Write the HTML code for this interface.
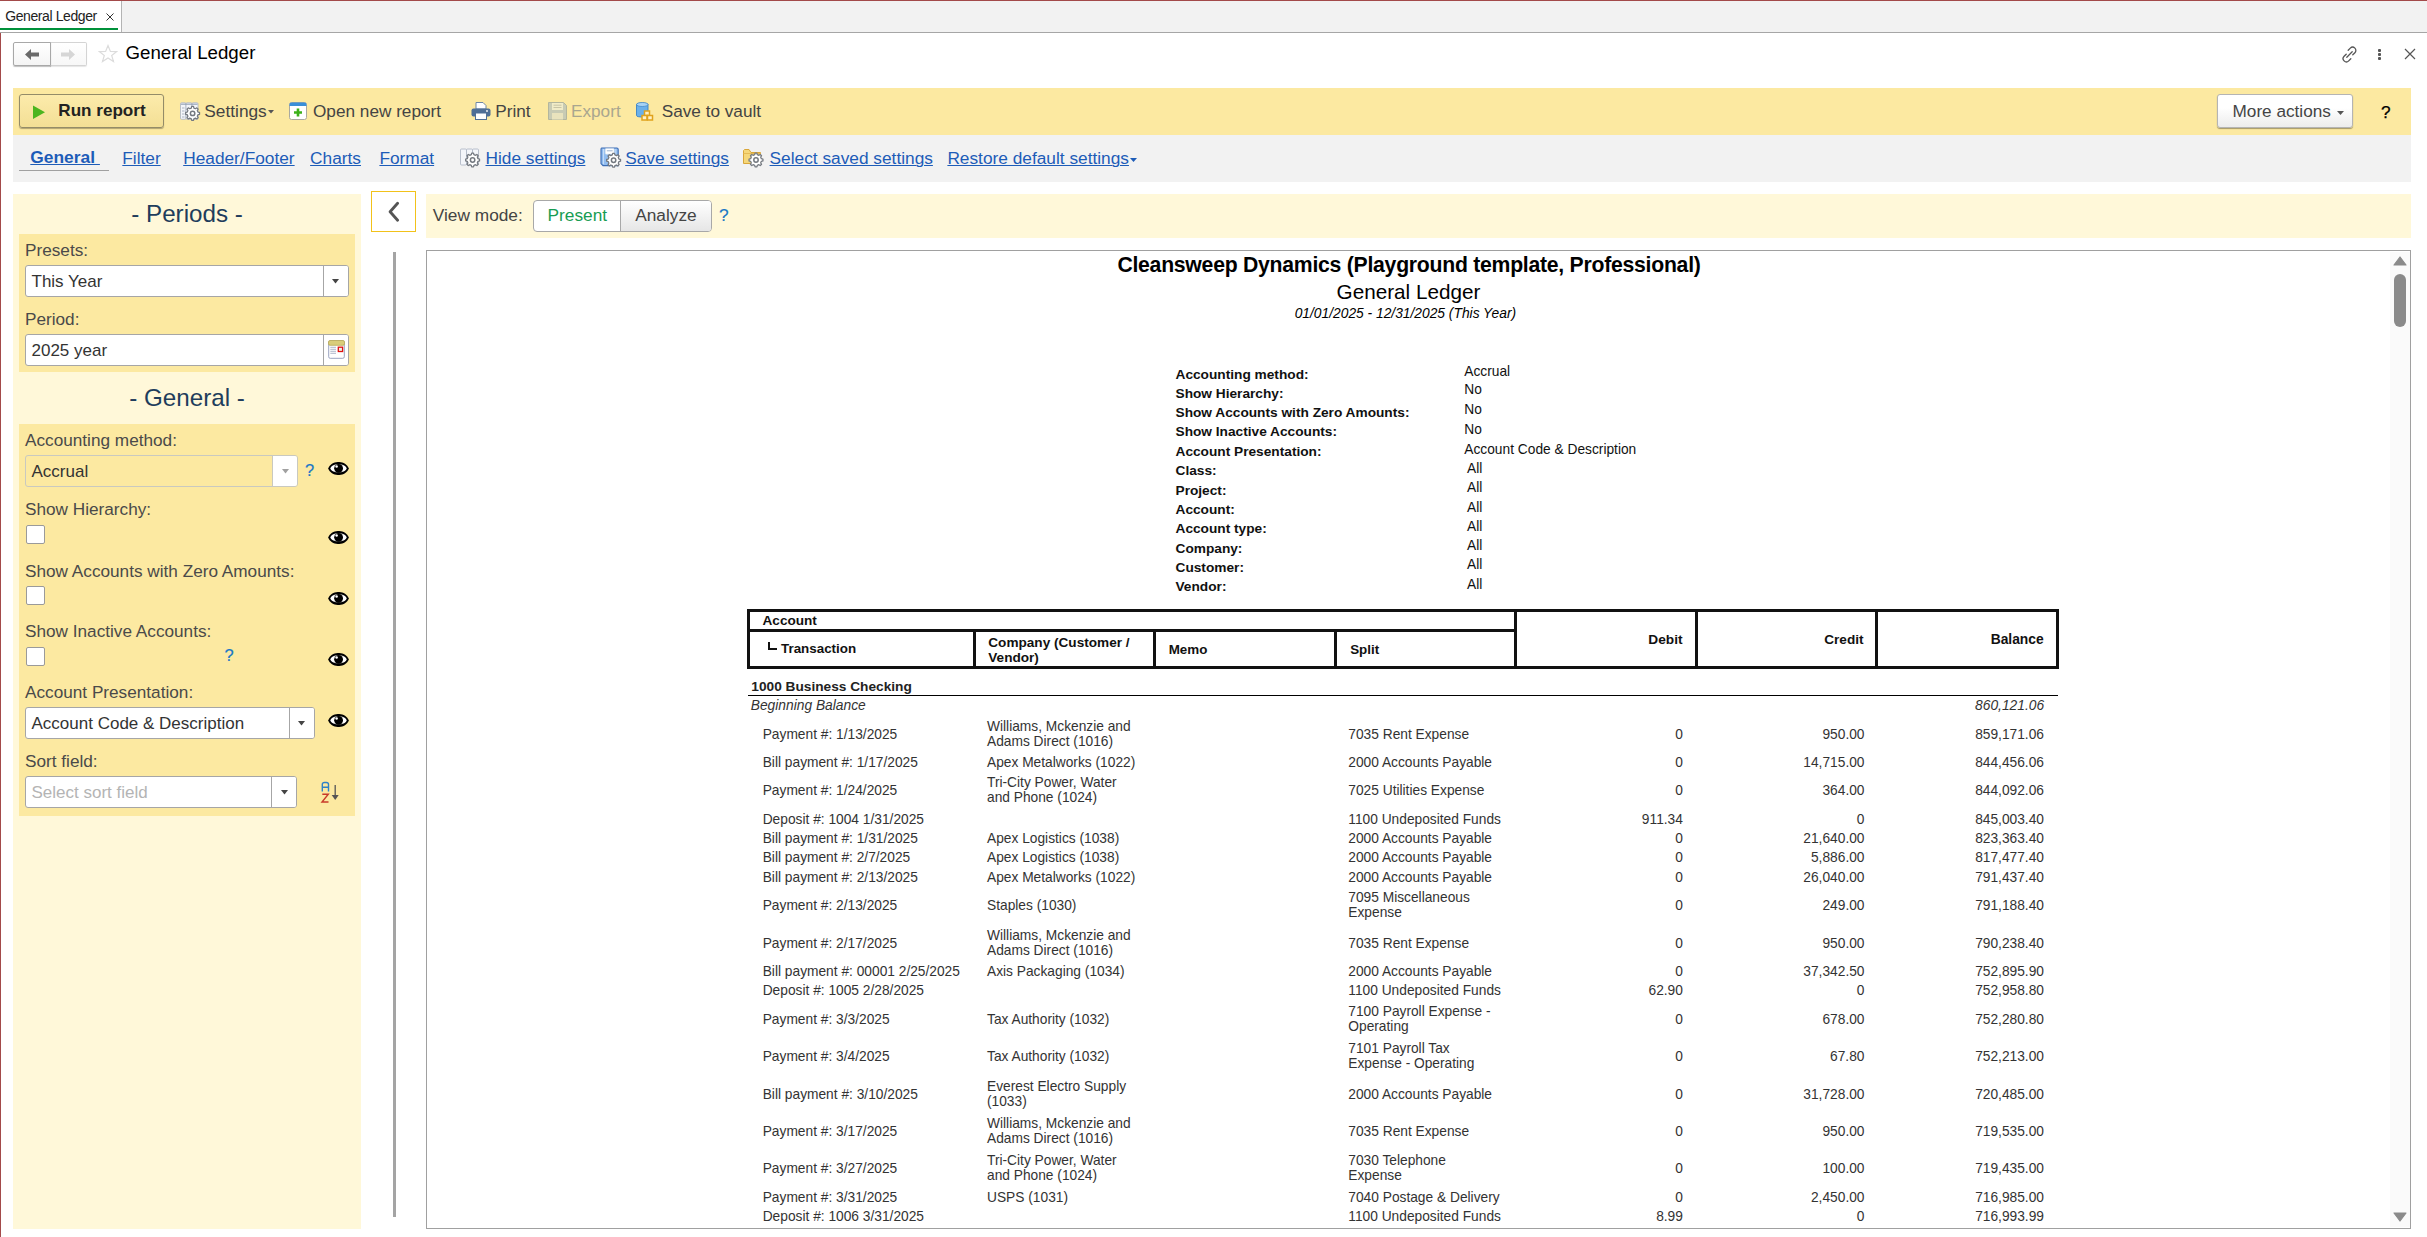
<!DOCTYPE html>
<html><head><meta charset="utf-8"><title>General Ledger</title>
<style>
html,body{margin:0;padding:0;}
body{width:2427px;height:1237px;overflow:hidden;position:relative;background:#fff;font-family:"Liberation Sans", sans-serif;}
.t{position:absolute;white-space:nowrap;}
.r{position:absolute;box-sizing:border-box;}
</style></head><body>
<div class="r" style="left:0px;top:0px;width:2427px;height:1px;background:#a34a4a;"></div>
<div class="r" style="left:0px;top:1px;width:2427px;height:31px;background:#f2f2f2;"></div>
<div class="r" style="left:0px;top:1px;width:121px;height:31px;background:#fff;"></div>
<div class="r" style="left:121px;top:1px;width:1px;height:31px;background:#b4b4b4;"></div>
<div class="r" style="left:0px;top:28px;width:118px;height:2px;background:#00913a;"></div>
<div class="t" style="left:5.20px;top:7.15px;font-size:14px;line-height:18px;color:#222;letter-spacing:-0.4px;">General Ledger</div>
<svg class="r" style="left:106px;top:13px" width="8" height="8" viewBox="0 0 8 8"><path d="M0.5 0.5L7.5 7.5M7.5 0.5L0.5 7.5" stroke="#333" stroke-width="1"/></svg>
<div class="r" style="left:0px;top:32px;width:2427px;height:1px;background:#a6a6a6;"></div>
<div class="r" style="left:0px;top:33px;width:1px;height:1204px;background:#a34a4a;"></div>
<div class="r" style="left:50px;top:42px;width:37px;height:24px;border:1px solid #d4d4d4;border-left:none;border-radius:0 2px 2px 0;background:linear-gradient(#fff,#f7f7f7);box-shadow:0 1px 1px rgba(0,0,0,.1);"></div>
<div class="r" style="left:13px;top:42px;width:38px;height:24px;border:1px solid #a8a8a8;border-radius:2px 0 0 2px;background:linear-gradient(#fff,#f4f4f4);box-shadow:0 1px 1px rgba(0,0,0,.25);"></div>
<svg class="r" style="left:25px;top:49px" width="14" height="11" viewBox="0 0 14 11"><path d="M0 5.5L6 0V3.5H14V7.5H6V11Z" fill="#6a6a6a"/></svg>
<svg class="r" style="left:61px;top:49px" width="14" height="11" viewBox="0 0 14 11"><path d="M14 5.5L8 0V3.5H0V7.5H8V11Z" fill="#d6d6d6"/></svg>
<svg class="r" style="left:98px;top:44px" width="20" height="20" viewBox="0 0 20 20"><path d="M10 1.5L12.4 7.4L18.6 7.6L13.7 11.5L15.5 17.6L10 14L4.5 17.6L6.3 11.5L1.4 7.6L7.6 7.4Z" fill="none" stroke="#dcdcdc" stroke-width="1.2"/></svg>
<div class="t" style="left:125.50px;top:41.22px;font-size:18.7px;line-height:24px;color:#000;">General Ledger</div>
<svg class="r" style="left:2341px;top:46px" width="17" height="17" viewBox="0 0 17 17"><g fill="none" stroke="#555" stroke-width="1.3" stroke-linecap="round"><path d="M7.2 4.2L9.3 2.1a3.2 3.2 0 0 1 4.6 4.6L11.8 8.8"/><path d="M9.8 12.8L7.7 14.9a3.2 3.2 0 0 1-4.6-4.6L5.2 8.2"/><path d="M5.8 11.2L11.2 5.8"/></g></svg>
<div class="r" style="left:2378px;top:49px;width:3px;height:3px;background:#555;border-radius:1px;"></div>
<div class="r" style="left:2378px;top:53px;width:3px;height:3px;background:#555;border-radius:1px;"></div>
<div class="r" style="left:2378px;top:57px;width:3px;height:3px;background:#555;border-radius:1px;"></div>
<svg class="r" style="left:2404px;top:48px" width="12" height="12" viewBox="0 0 12 12"><path d="M1 1L11 11M11 1L1 11" stroke="#555" stroke-width="1.2"/></svg>
<div class="r" style="left:13px;top:88px;width:2398px;height:47px;background:#fce9a1;"></div>
<div class="r" style="left:19px;top:94px;width:145px;height:34px;border:1px solid #948c68;border-radius:3px;background:linear-gradient(#fcebab,#f3df95);box-shadow:0 1px 1px rgba(0,0,0,.3);"></div>
<svg class="r" style="left:32px;top:105px" width="14" height="15" viewBox="0 0 14 15"><path d="M1 0.5L13 7.2L1 14Z" fill="#4cb51f"/></svg>
<div class="t" style="left:58.30px;top:99.97px;font-size:17.1px;line-height:22px;color:#222;font-weight:700;">Run report</div>
<svg class="r" style="left:180px;top:102px" width="21" height="20" viewBox="0 0 21 20"><g fill="#f3f5f9" stroke="#a9b3c3" stroke-width="0.8"><rect x="0.5" y="0.8" width="5.5" height="16.5" rx="1"/><rect x="6" y="0.8" width="6" height="16.5" rx="1"/><rect x="12" y="0.8" width="6" height="16.5" rx="1"/></g><path d="M2 6H4.5M2 9H4.5M2 12H4.5M2 15H4.5" stroke="#9aa3b5" stroke-width="0.8"/><path d="M1 2.2H17.5" stroke="#8d9bb0" stroke-width="1"/><path d="M11.32 6.05L11.67 4.46L13.53 4.46L13.88 6.05L15.47 6.71L16.85 5.84L18.16 7.15L17.29 8.53L17.95 10.12L19.54 10.47L19.54 12.33L17.95 12.68L17.29 14.27L18.16 15.65L16.85 16.96L15.47 16.09L13.88 16.75L13.53 18.34L11.67 18.34L11.32 16.75L9.73 16.09L8.35 16.96L7.04 15.65L7.91 14.27L7.25 12.68L5.66 12.33L5.66 10.47L7.25 10.12L7.91 8.53L7.04 7.15L8.35 5.84L9.73 6.71Z" fill="#fff" stroke="#747980" stroke-width="1.25" stroke-linejoin="round"/><circle cx="12.6" cy="11.4" r="2.2" fill="#fff" stroke="#747980" stroke-width="1.5"/></svg>
<div class="t" style="left:204.30px;top:99.81px;font-size:17.3px;line-height:22px;color:#444;">Settings</div>
<svg class="r" style="left:268px;top:110px" width="6" height="4" viewBox="0 0 6 4"><path d="M0 0H6L3 3.6Z" fill="#555"/></svg>
<svg class="r" style="left:289px;top:102px" width="18" height="18" viewBox="0 0 18 18"><rect x="0.5" y="0.5" width="17" height="17" rx="2" fill="#fff" stroke="#a9a9a0"/><path d="M0.5 2.5a2 2 0 0 1 2-2h13a2 2 0 0 1 2 2V4H0.5Z" fill="#3a8fd8"/><path d="M9 6.5V14.5M5 10.5H13" stroke="#3cb11a" stroke-width="2.6"/></svg>
<div class="t" style="left:313.00px;top:99.84px;font-size:17.2px;line-height:22px;color:#444;">Open new report</div>
<svg class="r" style="left:471px;top:102px" width="20" height="18" viewBox="0 0 20 18"><path d="M5 0.5H12L15 3.5V7H5Z" fill="#fff" stroke="#6d87a6" stroke-width="1"/><rect x="0.5" y="6.5" width="19" height="8" rx="2" fill="#4f6f96"/><rect x="4.5" y="11" width="11" height="6.5" fill="#fff" stroke="#4f6f96"/><circle cx="16" cy="9" r="0.9" fill="#fff"/></svg>
<div class="t" style="left:495.30px;top:99.84px;font-size:17.2px;line-height:22px;color:#444;">Print</div>
<svg class="r" style="left:548px;top:102px" width="19" height="18" viewBox="0 0 19 18"><path d="M0.5 0.5H15.5L18.5 3.5V17.5H0.5Z" fill="#c8cbb4" stroke="#b3b69e"/><rect x="4" y="1" width="11" height="7" fill="#f1ecc8"/><path d="M5.5 3.2H13.5M5.5 5.5H13.5" stroke="#c3c0a0" stroke-width="0.9"/><rect x="4" y="11" width="11" height="6.5" fill="#e9e3bd"/></svg>
<div class="t" style="left:571.00px;top:99.84px;font-size:17.2px;line-height:22px;color:#a9a68f;">Export</div>
<svg class="r" style="left:636px;top:102px" width="21" height="19" viewBox="0 0 21 19"><path d="M0.5 2.5C0.5 0.5 12 0.5 12 2.5V13.5C12 15.5 0.5 15.5 0.5 13.5Z" fill="#6ab0ea" stroke="#3b82c4" stroke-width="0.9"/><ellipse cx="6.25" cy="2.5" rx="5.75" ry="2" fill="#a7d3f5" stroke="#3b82c4" stroke-width="0.7"/><g fill="#fff1c4" stroke="#e0a21c" stroke-width="1.5"><rect x="8.5" y="9" width="5" height="4.5"/><rect x="6" y="13.5" width="5" height="4.5"/><rect x="11.5" y="13.5" width="5" height="4.5"/></g></svg>
<div class="t" style="left:661.70px;top:99.84px;font-size:17.2px;line-height:22px;color:#444;">Save to vault</div>
<div class="r" style="left:2217px;top:94px;width:136px;height:34px;border:1px solid #b4b4b4;border-radius:3px;background:linear-gradient(#fff 40%,#ececec);box-shadow:0 1px 1px rgba(0,0,0,.35);"></div>
<div class="t" style="left:2232.50px;top:99.84px;font-size:17.2px;line-height:22px;color:#444;">More actions</div>
<svg class="r" style="left:2337px;top:111px" width="7" height="4" viewBox="0 0 7 4"><path d="M0 0H7L3.5 4Z" fill="#555"/></svg>
<div class="t" style="left:2381.00px;top:100.64px;font-size:17.2px;line-height:22px;color:#000;-webkit-text-stroke:0.25px #000;">?</div>
<div class="r" style="left:13px;top:135px;width:2398px;height:47px;background:#f2f2f2;"></div>
<div class="t" style="left:30.30px;top:146.17px;font-size:17.4px;line-height:23px;color:#1d5cb8;font-weight:700;text-decoration:underline;text-underline-offset:1px;text-decoration-thickness:1px;">General&nbsp;</div>
<div class="r" style="left:19px;top:170px;width:90px;height:1px;background:#a0a0a0;"></div>
<div class="t" style="left:122.30px;top:146.71px;font-size:17.3px;line-height:22px;color:#1d5cb8;text-decoration:underline;text-underline-offset:1px;text-decoration-thickness:1px;">Filter</div>
<div class="t" style="left:183.20px;top:146.71px;font-size:17.3px;line-height:22px;color:#1d5cb8;text-decoration:underline;text-underline-offset:1px;text-decoration-thickness:1px;">Header/Footer</div>
<div class="t" style="left:310.10px;top:146.71px;font-size:17.3px;line-height:22px;color:#1d5cb8;text-decoration:underline;text-underline-offset:1px;text-decoration-thickness:1px;">Charts</div>
<div class="t" style="left:379.40px;top:146.71px;font-size:17.3px;line-height:22px;color:#1d5cb8;text-decoration:underline;text-underline-offset:1px;text-decoration-thickness:1px;">Format</div>
<svg class="r" style="left:460px;top:148px" width="21" height="20" viewBox="0 0 21 20"><g fill="#f4f6fa" stroke="#aab3c2" stroke-width="0.8"><rect x="0.5" y="1" width="6" height="16" rx="1"/><rect x="6.5" y="1" width="6" height="16" rx="1"/><rect x="12.5" y="1" width="6" height="16" rx="1"/></g><path d="M11.32 6.65L11.67 5.06L13.53 5.06L13.88 6.65L15.47 7.31L16.85 6.44L18.16 7.75L17.29 9.13L17.95 10.72L19.54 11.07L19.54 12.93L17.95 13.28L17.29 14.87L18.16 16.25L16.85 17.56L15.47 16.69L13.88 17.35L13.53 18.94L11.67 18.94L11.32 17.35L9.73 16.69L8.35 17.56L7.04 16.25L7.91 14.87L7.25 13.28L5.66 12.93L5.66 11.07L7.25 10.72L7.91 9.13L7.04 7.75L8.35 6.44L9.73 7.31Z" fill="#fff" stroke="#747980" stroke-width="1.25" stroke-linejoin="round"/><circle cx="12.6" cy="12" r="2.2" fill="#fff" stroke="#747980" stroke-width="1.5"/></svg>
<div class="t" style="left:485.50px;top:146.71px;font-size:17.3px;line-height:22px;color:#1d5cb8;text-decoration:underline;text-underline-offset:1px;text-decoration-thickness:1px;">Hide settings</div>
<svg class="r" style="left:600px;top:147px" width="22" height="22" viewBox="0 0 22 22"><path d="M1.6 1H16.8Q18.2 1 18.2 2.4V18.6H3L1 16.6V2.4Q1 1 1.6 1Z" fill="#92bdf0" stroke="#3c6cb3" stroke-width="1.1"/><path d="M3.5 2V17M15.8 2V12" stroke="#c4dcf8" stroke-width="1"/><rect x="5.2" y="1.6" width="9" height="5.6" rx="1" fill="#fff" stroke="#c9d6e6" stroke-width="0.6"/><path d="M6.8 3.8H12.6" stroke="#9db3cf" stroke-width="1"/><path d="M12.32 7.95L12.67 6.36L14.53 6.36L14.88 7.95L16.47 8.61L17.85 7.74L19.16 9.05L18.29 10.43L18.95 12.02L20.54 12.37L20.54 14.23L18.95 14.58L18.29 16.17L19.16 17.55L17.85 18.86L16.47 17.99L14.88 18.65L14.53 20.24L12.67 20.24L12.32 18.65L10.73 17.99L9.35 18.86L8.04 17.55L8.91 16.17L8.25 14.58L6.66 14.23L6.66 12.37L8.25 12.02L8.91 10.43L8.04 9.05L9.35 7.74L10.73 8.61Z" fill="#fff" stroke="#747980" stroke-width="1.25" stroke-linejoin="round"/><circle cx="13.6" cy="13.3" r="2.2" fill="#fff" stroke="#747980" stroke-width="1.5"/></svg>
<div class="t" style="left:625.20px;top:146.71px;font-size:17.3px;line-height:22px;color:#1d5cb8;text-decoration:underline;text-underline-offset:1px;text-decoration-thickness:1px;">Save settings</div>
<svg class="r" style="left:743px;top:147px" width="22" height="21" viewBox="0 0 22 21"><path d="M0.5 3.5V16.5H17.5V5.5H8L6 2.5H1.5Z" fill="#f5d77a" stroke="#d9a63a"/><path d="M0.5 6.5H17.5" stroke="#e6bb55"/><path d="M11.72 7.65L12.07 6.06L13.93 6.06L14.28 7.65L15.87 8.31L17.25 7.44L18.56 8.75L17.69 10.13L18.35 11.72L19.94 12.07L19.94 13.93L18.35 14.28L17.69 15.87L18.56 17.25L17.25 18.56L15.87 17.69L14.28 18.35L13.93 19.94L12.07 19.94L11.72 18.35L10.13 17.69L8.75 18.56L7.44 17.25L8.31 15.87L7.65 14.28L6.06 13.93L6.06 12.07L7.65 11.72L8.31 10.13L7.44 8.75L8.75 7.44L10.13 8.31Z" fill="#fff" stroke="#747980" stroke-width="1.25" stroke-linejoin="round"/><circle cx="13" cy="13" r="2.2" fill="#fff" stroke="#747980" stroke-width="1.5"/></svg>
<div class="t" style="left:769.60px;top:146.71px;font-size:17.3px;line-height:22px;color:#1d5cb8;text-decoration:underline;text-underline-offset:1px;text-decoration-thickness:1px;">Select saved settings</div>
<div class="t" style="left:947.40px;top:146.71px;font-size:17.3px;line-height:22px;color:#1d5cb8;text-decoration:underline;text-underline-offset:1px;text-decoration-thickness:1px;">Restore default settings</div>
<svg class="r" style="left:1130px;top:158px" width="7" height="4" viewBox="0 0 7 4"><path d="M0 0H7L3.5 4Z" fill="#1d5cb8"/></svg>
<div class="r" style="left:13px;top:194px;width:348px;height:1035px;background:#fff8d9;"></div>
<div class="t" style="left:-813.00px;width:2000px;text-align:center;top:197.71px;font-size:24.2px;line-height:31px;color:#1e3d5c;">- Periods -</div>
<div class="r" style="left:19px;top:234px;width:336px;height:138px;background:#fce9a1;"></div>
<div class="t" style="left:25.00px;top:239.04px;font-size:17.2px;line-height:22px;color:#4a4a4a;">Presets:</div>
<div class="r" style="left:25px;top:265px;width:324px;height:32px;border:1px solid #a6a6a6;border-radius:3px;background:#fff;"></div>
<div class="r" style="left:323px;top:266px;width:25px;height:30px;background:#fff;border-left:1px solid #a6a6a6;border-radius:0 2px 2px 0;"></div>
<div class="t" style="left:31.50px;top:270.71px;font-size:17.0px;line-height:22px;color:#333;">This Year</div>
<svg class="r" style="left:332px;top:279px" width="7" height="5" viewBox="0 0 7 5"><path d="M0 0H7L3.5 4.5Z" fill="#444"/></svg>
<div class="t" style="left:25.00px;top:307.74px;font-size:17.2px;line-height:22px;color:#4a4a4a;">Period:</div>
<div class="r" style="left:25px;top:334px;width:324px;height:32px;border:1px solid #a6a6a6;border-radius:3px;background:#fff;"></div>
<div class="r" style="left:323px;top:335px;width:25px;height:30px;background:#fff;border-left:1px solid #a6a6a6;border-radius:0 2px 2px 0;"></div>
<div class="t" style="left:31.50px;top:339.71px;font-size:17.0px;line-height:22px;color:#333;">2025 year</div>
<svg class="r" style="left:328px;top:340px" width="17" height="19" viewBox="0 0 17 19"><rect x="0.7" y="1" width="15.6" height="17.3" rx="1.5" fill="#fff" stroke="#9aa3c0" stroke-width="1"/><rect x="0.5" y="0.5" width="16" height="4.8" rx="1.5" fill="#d9cd7a" stroke="#b8a855" stroke-width="0.8"/><path d="M2.3 7.3H8M2.3 9.3H8M2.3 11.3H8M2.3 13.3H8" stroke="#9aa3bb" stroke-width="0.8"/><rect x="10.3" y="7.2" width="4.3" height="4.3" fill="#e8f8e8" stroke="#e01010" stroke-width="1.3"/></svg>
<div class="t" style="left:-813.00px;width:2000px;text-align:center;top:381.61px;font-size:24.2px;line-height:31px;color:#1e3d5c;">- General -</div>
<div class="r" style="left:19px;top:424px;width:336px;height:392px;background:#fce9a1;"></div>
<div class="t" style="left:25.00px;top:428.54px;font-size:17.2px;line-height:22px;color:#4a4a4a;">Accounting method:</div>
<div class="r" style="left:25px;top:455px;width:273px;height:32px;border:1px solid #c9c9c0;border-radius:3px;background:#fce9a1;"></div>
<div class="r" style="left:272px;top:456px;width:25px;height:30px;background:#fff;border-left:1px solid #c9c9c0;border-radius:0 2px 2px 0;"></div>
<div class="t" style="left:31.50px;top:460.51px;font-size:17.0px;line-height:22px;color:#333;">Accrual</div>
<svg class="r" style="left:282px;top:469px" width="7" height="5" viewBox="0 0 7 5"><path d="M0 0H7L3.5 4.5Z" fill="#a0a0a0"/></svg>
<div class="t" style="left:305.00px;top:459.78px;font-size:16.5px;line-height:21px;color:#1a78c6;-webkit-text-stroke:0.2px #1a78c6;">?</div>
<svg class="r" style="left:328px;top:462px" width="21" height="13" viewBox="0 0 21 13"><path d="M0.2 6.5C3.5 -2.2 17.5 -2.2 20.8 6.5C17.5 15.2 3.5 15.2 0.2 6.5Z" fill="#000"/><path d="M2.4 6.4C4 1 17 1 18.6 6.4C17 11.6 4 11.6 2.4 6.4Z" fill="#fff"/><circle cx="10.6" cy="6.3" r="4.4" fill="#000"/><circle cx="8.6" cy="4.4" r="1.25" fill="#fff"/></svg>
<div class="t" style="left:25.00px;top:498.24px;font-size:17.2px;line-height:22px;color:#4a4a4a;">Show Hierarchy:</div>
<div class="r" style="left:26px;top:525px;width:19px;height:19px;border:1px solid #9a9a9a;border-radius:2px;background:#fff;"></div>
<svg class="r" style="left:328px;top:531px" width="21" height="13" viewBox="0 0 21 13"><path d="M0.2 6.5C3.5 -2.2 17.5 -2.2 20.8 6.5C17.5 15.2 3.5 15.2 0.2 6.5Z" fill="#000"/><path d="M2.4 6.4C4 1 17 1 18.6 6.4C17 11.6 4 11.6 2.4 6.4Z" fill="#fff"/><circle cx="10.6" cy="6.3" r="4.4" fill="#000"/><circle cx="8.6" cy="4.4" r="1.25" fill="#fff"/></svg>
<div class="t" style="left:25.00px;top:559.54px;font-size:17.2px;line-height:22px;color:#4a4a4a;">Show Accounts with Zero Amounts:</div>
<div class="r" style="left:26px;top:586px;width:19px;height:19px;border:1px solid #9a9a9a;border-radius:2px;background:#fff;"></div>
<svg class="r" style="left:328px;top:592px" width="21" height="13" viewBox="0 0 21 13"><path d="M0.2 6.5C3.5 -2.2 17.5 -2.2 20.8 6.5C17.5 15.2 3.5 15.2 0.2 6.5Z" fill="#000"/><path d="M2.4 6.4C4 1 17 1 18.6 6.4C17 11.6 4 11.6 2.4 6.4Z" fill="#fff"/><circle cx="10.6" cy="6.3" r="4.4" fill="#000"/><circle cx="8.6" cy="4.4" r="1.25" fill="#fff"/></svg>
<div class="t" style="left:25.00px;top:620.34px;font-size:17.2px;line-height:22px;color:#4a4a4a;">Show Inactive Accounts:</div>
<div class="r" style="left:26px;top:647px;width:19px;height:19px;border:1px solid #9a9a9a;border-radius:2px;background:#fff;"></div>
<svg class="r" style="left:328px;top:653px" width="21" height="13" viewBox="0 0 21 13"><path d="M0.2 6.5C3.5 -2.2 17.5 -2.2 20.8 6.5C17.5 15.2 3.5 15.2 0.2 6.5Z" fill="#000"/><path d="M2.4 6.4C4 1 17 1 18.6 6.4C17 11.6 4 11.6 2.4 6.4Z" fill="#fff"/><circle cx="10.6" cy="6.3" r="4.4" fill="#000"/><circle cx="8.6" cy="4.4" r="1.25" fill="#fff"/></svg>
<div class="t" style="left:224.50px;top:644.78px;font-size:16.5px;line-height:21px;color:#1a78c6;-webkit-text-stroke:0.2px #1a78c6;">?</div>
<div class="t" style="left:25.00px;top:681.04px;font-size:17.2px;line-height:22px;color:#4a4a4a;">Account Presentation:</div>
<div class="r" style="left:25px;top:707px;width:290px;height:32px;border:1px solid #a6a6a6;border-radius:3px;background:#fff;"></div>
<div class="r" style="left:289px;top:708px;width:25px;height:30px;background:#fff;border-left:1px solid #a6a6a6;border-radius:0 2px 2px 0;"></div>
<div class="t" style="left:31.50px;top:712.71px;font-size:17.0px;line-height:22px;color:#333;">Account Code &amp; Description</div>
<svg class="r" style="left:298px;top:721px" width="7" height="5" viewBox="0 0 7 5"><path d="M0 0H7L3.5 4.5Z" fill="#444"/></svg>
<svg class="r" style="left:328px;top:714px" width="21" height="13" viewBox="0 0 21 13"><path d="M0.2 6.5C3.5 -2.2 17.5 -2.2 20.8 6.5C17.5 15.2 3.5 15.2 0.2 6.5Z" fill="#000"/><path d="M2.4 6.4C4 1 17 1 18.6 6.4C17 11.6 4 11.6 2.4 6.4Z" fill="#fff"/><circle cx="10.6" cy="6.3" r="4.4" fill="#000"/><circle cx="8.6" cy="4.4" r="1.25" fill="#fff"/></svg>
<div class="t" style="left:25.00px;top:749.74px;font-size:17.2px;line-height:22px;color:#4a4a4a;">Sort field:</div>
<div class="r" style="left:25px;top:776px;width:272px;height:32px;border:1px solid #a6a6a6;border-radius:3px;background:#fff;"></div>
<div class="r" style="left:271px;top:777px;width:25px;height:30px;background:#fff;border-left:1px solid #a6a6a6;border-radius:0 2px 2px 0;"></div>
<div class="t" style="left:31.50px;top:781.51px;font-size:17.0px;line-height:22px;color:#b4b4b4;">Select sort field</div>
<svg class="r" style="left:281px;top:790px" width="7" height="5" viewBox="0 0 7 5"><path d="M0 0H7L3.5 4.5Z" fill="#444"/></svg>
<svg class="r" style="left:320px;top:781px" width="20" height="23" viewBox="0 0 20 23"><path d="M2.3 10.5V3.5Q2.3 1.5 4.5 1.5H6.3Q8.5 1.5 8.5 3.5V10.5M2.3 6.3H8.5" fill="none" stroke="#2f82c8" stroke-width="1.4"/><path d="M2.3 13.2H8.3L2 21H8.5" fill="none" stroke="#c83a2a" stroke-width="1.4"/><path d="M15.2 4V15" stroke="#555" stroke-width="1.3"/><path d="M11.7 14H18.7L15.2 19Z" fill="#555"/></svg>
<div class="r" style="left:371px;top:191px;width:45px;height:41px;border:1px solid #f2c21a;background:#fff;"></div>
<svg class="r" style="left:386px;top:201px" width="14" height="21" viewBox="0 0 14 21"><path d="M11.6 2.2L4.1 10.7L11.6 19.2" fill="none" stroke="#555" stroke-width="2.8" stroke-linecap="round" stroke-linejoin="round"/></svg>
<div class="r" style="left:393px;top:252px;width:3px;height:965px;background:#a4a4a4;"></div>
<div class="r" style="left:426px;top:194px;width:1985px;height:44px;background:#fff8d9;"></div>
<div class="t" style="left:432.80px;top:203.71px;font-size:17.3px;line-height:22px;color:#444;">View mode:</div>
<div class="r" style="left:533px;top:200px;width:179px;height:32px;border:1px solid #a8a8a8;border-radius:4px;background:#fff;overflow:hidden;"></div>
<div class="r" style="left:620px;top:201px;width:91px;height:30px;border-left:1px solid #a8a8a8;border-radius:0 3px 3px 0;background:linear-gradient(#fff,#e6e6e6);"></div>
<div class="t" style="left:547.50px;top:203.71px;font-size:17.3px;line-height:22px;color:#179c52;">Present</div>
<div class="t" style="left:635.20px;top:203.71px;font-size:17.3px;line-height:22px;color:#444;">Analyze</div>
<div class="t" style="left:719.00px;top:203.91px;font-size:17.3px;line-height:22px;color:#1a78c6;-webkit-text-stroke:0.15px #1a78c6;">?</div>
<div class="r" style="left:426px;top:250px;width:1985px;height:979px;border:1px solid #a0a0a0;background:#fff;"></div>
<div class="r" style="left:2390px;top:252px;width:20px;height:975px;background:#fafafa;"></div>
<svg class="r" style="left:2393px;top:256px" width="14" height="10" viewBox="0 0 14 10"><path d="M7 1L13 9H1Z" fill="#8a8a8a" stroke="#8a8a8a" stroke-width="1.2" stroke-linejoin="round"/></svg>
<div class="r" style="left:2394px;top:274px;width:12px;height:53px;background:#8a8a8a;border-radius:6px;"></div>
<svg class="r" style="left:2393px;top:1212px" width="14" height="10" viewBox="0 0 14 10"><path d="M1 1H13L7 9Z" fill="#8a8a8a" stroke="#8a8a8a" stroke-width="1.2" stroke-linejoin="round"/></svg>
<div class="t" style="left:409.00px;width:2000px;text-align:center;top:251.15px;font-size:21.2px;line-height:28px;color:#000;font-weight:700;letter-spacing:-0.25px;">Cleansweep Dynamics (Playground template, Professional)</div>
<div class="t" style="left:408.50px;width:2000px;text-align:center;top:278.33px;font-size:20.7px;line-height:27px;color:#000;">General Ledger</div>
<div class="t" style="left:405.40px;width:2000px;text-align:center;top:304.72px;font-size:13.8px;line-height:18px;color:#000;font-style:italic;">01/01/2025 - 12/31/2025 (This Year)</div>
<div class="t" style="left:1175.50px;top:366.00px;font-size:13.7px;line-height:18px;color:#111;font-weight:700;">Accounting method:</div>
<div class="t" style="left:1464.30px;top:363.00px;font-size:13.75px;line-height:18px;color:#111;">Accrual</div>
<div class="t" style="left:1175.50px;top:385.00px;font-size:13.7px;line-height:18px;color:#111;font-weight:700;">Show Hierarchy:</div>
<div class="t" style="left:1464.30px;top:381.00px;font-size:13.75px;line-height:18px;color:#111;">No</div>
<div class="t" style="left:1175.50px;top:404.00px;font-size:13.7px;line-height:18px;color:#111;font-weight:700;">Show Accounts with Zero Amounts:</div>
<div class="t" style="left:1464.30px;top:401.00px;font-size:13.75px;line-height:18px;color:#111;">No</div>
<div class="t" style="left:1175.50px;top:423.00px;font-size:13.7px;line-height:18px;color:#111;font-weight:700;">Show Inactive Accounts:</div>
<div class="t" style="left:1464.30px;top:421.00px;font-size:13.75px;line-height:18px;color:#111;">No</div>
<div class="t" style="left:1175.50px;top:443.00px;font-size:13.7px;line-height:18px;color:#111;font-weight:700;">Account Presentation:</div>
<div class="t" style="left:1464.30px;top:441.00px;font-size:13.75px;line-height:18px;color:#111;">Account Code &amp; Description</div>
<div class="t" style="left:1175.50px;top:462.00px;font-size:13.7px;line-height:18px;color:#111;font-weight:700;">Class:</div>
<div class="t" style="left:1467.00px;top:460.00px;font-size:13.75px;line-height:18px;color:#111;">All</div>
<div class="t" style="left:1175.50px;top:482.00px;font-size:13.7px;line-height:18px;color:#111;font-weight:700;">Project:</div>
<div class="t" style="left:1467.00px;top:479.00px;font-size:13.75px;line-height:18px;color:#111;">All</div>
<div class="t" style="left:1175.50px;top:501.00px;font-size:13.7px;line-height:18px;color:#111;font-weight:700;">Account:</div>
<div class="t" style="left:1467.00px;top:499.00px;font-size:13.75px;line-height:18px;color:#111;">All</div>
<div class="t" style="left:1175.50px;top:520.00px;font-size:13.7px;line-height:18px;color:#111;font-weight:700;">Account type:</div>
<div class="t" style="left:1467.00px;top:518.00px;font-size:13.75px;line-height:18px;color:#111;">All</div>
<div class="t" style="left:1175.50px;top:540.00px;font-size:13.7px;line-height:18px;color:#111;font-weight:700;">Company:</div>
<div class="t" style="left:1467.00px;top:537.00px;font-size:13.75px;line-height:18px;color:#111;">All</div>
<div class="t" style="left:1175.50px;top:559.00px;font-size:13.7px;line-height:18px;color:#111;font-weight:700;">Customer:</div>
<div class="t" style="left:1467.00px;top:556.00px;font-size:13.75px;line-height:18px;color:#111;">All</div>
<div class="t" style="left:1175.50px;top:578.00px;font-size:13.7px;line-height:18px;color:#111;font-weight:700;">Vendor:</div>
<div class="t" style="left:1467.00px;top:576.00px;font-size:13.75px;line-height:18px;color:#111;">All</div>
<div class="r" style="left:747px;top:609px;width:1312px;height:3px;background:#111;"></div>
<div class="r" style="left:747px;top:666px;width:1312px;height:3px;background:#111;"></div>
<div class="r" style="left:747px;top:629px;width:769px;height:3px;background:#111;"></div>
<div class="r" style="left:747px;top:609px;width:3px;height:60px;background:#111;"></div>
<div class="r" style="left:973px;top:629px;width:3px;height:40px;background:#111;"></div>
<div class="r" style="left:1153px;top:629px;width:3px;height:40px;background:#111;"></div>
<div class="r" style="left:1334px;top:629px;width:3px;height:40px;background:#111;"></div>
<div class="r" style="left:1514px;top:609px;width:3px;height:60px;background:#111;"></div>
<div class="r" style="left:1695px;top:609px;width:3px;height:60px;background:#111;"></div>
<div class="r" style="left:1875px;top:609px;width:3px;height:60px;background:#111;"></div>
<div class="r" style="left:2056px;top:609px;width:3px;height:60px;background:#111;"></div>
<div class="t" style="left:762.50px;top:612.09px;font-size:13.6px;line-height:18px;color:#111;font-weight:700;">Account</div>
<div class="r" style="left:768px;top:642px;width:2px;height:8px;background:#111;"></div>
<div class="r" style="left:768px;top:648px;width:9px;height:2px;background:#111;"></div>
<div class="t" style="left:781.00px;top:639.86px;font-size:13.4px;line-height:17px;color:#111;font-weight:700;">Transaction</div>
<div class="t" style="left:988.30px;top:633.89px;font-size:13.6px;line-height:18px;color:#111;font-weight:700;">Company (Customer /</div>
<div class="t" style="left:988.30px;top:648.79px;font-size:13.6px;line-height:18px;color:#111;font-weight:700;">Vendor)</div>
<div class="t" style="left:1168.70px;top:641.26px;font-size:13.4px;line-height:17px;color:#111;font-weight:700;">Memo</div>
<div class="t" style="left:1350.20px;top:641.26px;font-size:13.4px;line-height:17px;color:#111;font-weight:700;">Split</div>
<div class="t" style="right:744.50px;top:631.25px;font-size:13.7px;line-height:18px;color:#111;font-weight:700;">Debit</div>
<div class="t" style="right:563.50px;top:631.29px;font-size:13.6px;line-height:18px;color:#111;font-weight:700;">Credit</div>
<div class="t" style="right:383.40px;top:631.22px;font-size:13.8px;line-height:18px;color:#111;font-weight:700;">Balance</div>
<div class="t" style="left:751.30px;top:678.25px;font-size:13.7px;line-height:18px;color:#222;font-weight:700;">1000 Business Checking</div>
<div class="r" style="left:748px;top:695px;width:1310px;height:1px;background:#000;"></div>
<div class="t" style="left:750.70px;top:696.52px;font-size:13.8px;line-height:18px;color:#333;font-style:italic;">Beginning Balance</div>
<div class="t" style="right:382.90px;top:696.52px;font-size:13.8px;line-height:18px;color:#333;font-style:italic;">860,121.06</div>
<div class="t" style="left:762.70px;top:726.00px;font-size:13.75px;line-height:18px;color:#333;">Payment #: 1/13/2025</div>
<div class="t" style="left:987.00px;top:718.00px;font-size:13.75px;line-height:18px;color:#333;">Williams, Mckenzie and</div>
<div class="t" style="left:987.00px;top:733.00px;font-size:13.75px;line-height:18px;color:#333;">Adams Direct (1016)</div>
<div class="t" style="left:1348.30px;top:726.00px;font-size:13.75px;line-height:18px;color:#333;">7035 Rent Expense</div>
<div class="t" style="right:744.10px;top:726.00px;font-size:13.75px;line-height:18px;color:#333;">0</div>
<div class="t" style="right:562.50px;top:726.00px;font-size:13.75px;line-height:18px;color:#333;">950.00</div>
<div class="t" style="right:383.00px;top:726.00px;font-size:13.75px;line-height:18px;color:#333;">859,171.06</div>
<div class="t" style="left:762.70px;top:754.00px;font-size:13.75px;line-height:18px;color:#333;">Bill payment #: 1/17/2025</div>
<div class="t" style="left:987.00px;top:754.00px;font-size:13.75px;line-height:18px;color:#333;">Apex Metalworks (1022)</div>
<div class="t" style="left:1348.30px;top:754.00px;font-size:13.75px;line-height:18px;color:#333;">2000 Accounts Payable</div>
<div class="t" style="right:744.10px;top:754.00px;font-size:13.75px;line-height:18px;color:#333;">0</div>
<div class="t" style="right:562.50px;top:754.00px;font-size:13.75px;line-height:18px;color:#333;">14,715.00</div>
<div class="t" style="right:383.00px;top:754.00px;font-size:13.75px;line-height:18px;color:#333;">844,456.06</div>
<div class="t" style="left:762.70px;top:782.00px;font-size:13.75px;line-height:18px;color:#333;">Payment #: 1/24/2025</div>
<div class="t" style="left:987.00px;top:774.00px;font-size:13.75px;line-height:18px;color:#333;">Tri-City Power, Water</div>
<div class="t" style="left:987.00px;top:789.00px;font-size:13.75px;line-height:18px;color:#333;">and Phone (1024)</div>
<div class="t" style="left:1348.30px;top:782.00px;font-size:13.75px;line-height:18px;color:#333;">7025 Utilities Expense</div>
<div class="t" style="right:744.10px;top:782.00px;font-size:13.75px;line-height:18px;color:#333;">0</div>
<div class="t" style="right:562.50px;top:782.00px;font-size:13.75px;line-height:18px;color:#333;">364.00</div>
<div class="t" style="right:383.00px;top:782.00px;font-size:13.75px;line-height:18px;color:#333;">844,092.06</div>
<div class="t" style="left:762.70px;top:811.00px;font-size:13.75px;line-height:18px;color:#333;">Deposit #: 1004 1/31/2025</div>
<div class="t" style="left:1348.30px;top:811.00px;font-size:13.75px;line-height:18px;color:#333;">1100 Undeposited Funds</div>
<div class="t" style="right:744.10px;top:811.00px;font-size:13.75px;line-height:18px;color:#333;">911.34</div>
<div class="t" style="right:562.50px;top:811.00px;font-size:13.75px;line-height:18px;color:#333;">0</div>
<div class="t" style="right:383.00px;top:811.00px;font-size:13.75px;line-height:18px;color:#333;">845,003.40</div>
<div class="t" style="left:762.70px;top:830.00px;font-size:13.75px;line-height:18px;color:#333;">Bill payment #: 1/31/2025</div>
<div class="t" style="left:987.00px;top:830.00px;font-size:13.75px;line-height:18px;color:#333;">Apex Logistics (1038)</div>
<div class="t" style="left:1348.30px;top:830.00px;font-size:13.75px;line-height:18px;color:#333;">2000 Accounts Payable</div>
<div class="t" style="right:744.10px;top:830.00px;font-size:13.75px;line-height:18px;color:#333;">0</div>
<div class="t" style="right:562.50px;top:830.00px;font-size:13.75px;line-height:18px;color:#333;">21,640.00</div>
<div class="t" style="right:383.00px;top:830.00px;font-size:13.75px;line-height:18px;color:#333;">823,363.40</div>
<div class="t" style="left:762.70px;top:849.00px;font-size:13.75px;line-height:18px;color:#333;">Bill payment #: 2/7/2025</div>
<div class="t" style="left:987.00px;top:849.00px;font-size:13.75px;line-height:18px;color:#333;">Apex Logistics (1038)</div>
<div class="t" style="left:1348.30px;top:849.00px;font-size:13.75px;line-height:18px;color:#333;">2000 Accounts Payable</div>
<div class="t" style="right:744.10px;top:849.00px;font-size:13.75px;line-height:18px;color:#333;">0</div>
<div class="t" style="right:562.50px;top:849.00px;font-size:13.75px;line-height:18px;color:#333;">5,886.00</div>
<div class="t" style="right:383.00px;top:849.00px;font-size:13.75px;line-height:18px;color:#333;">817,477.40</div>
<div class="t" style="left:762.70px;top:869.00px;font-size:13.75px;line-height:18px;color:#333;">Bill payment #: 2/13/2025</div>
<div class="t" style="left:987.00px;top:869.00px;font-size:13.75px;line-height:18px;color:#333;">Apex Metalworks (1022)</div>
<div class="t" style="left:1348.30px;top:869.00px;font-size:13.75px;line-height:18px;color:#333;">2000 Accounts Payable</div>
<div class="t" style="right:744.10px;top:869.00px;font-size:13.75px;line-height:18px;color:#333;">0</div>
<div class="t" style="right:562.50px;top:869.00px;font-size:13.75px;line-height:18px;color:#333;">26,040.00</div>
<div class="t" style="right:383.00px;top:869.00px;font-size:13.75px;line-height:18px;color:#333;">791,437.40</div>
<div class="t" style="left:762.70px;top:897.00px;font-size:13.75px;line-height:18px;color:#333;">Payment #: 2/13/2025</div>
<div class="t" style="left:987.00px;top:897.00px;font-size:13.75px;line-height:18px;color:#333;">Staples (1030)</div>
<div class="t" style="left:1348.30px;top:889.00px;font-size:13.75px;line-height:18px;color:#333;">7095 Miscellaneous</div>
<div class="t" style="left:1348.30px;top:904.00px;font-size:13.75px;line-height:18px;color:#333;">Expense</div>
<div class="t" style="right:744.10px;top:897.00px;font-size:13.75px;line-height:18px;color:#333;">0</div>
<div class="t" style="right:562.50px;top:897.00px;font-size:13.75px;line-height:18px;color:#333;">249.00</div>
<div class="t" style="right:383.00px;top:897.00px;font-size:13.75px;line-height:18px;color:#333;">791,188.40</div>
<div class="t" style="left:762.70px;top:935.00px;font-size:13.75px;line-height:18px;color:#333;">Payment #: 2/17/2025</div>
<div class="t" style="left:987.00px;top:927.00px;font-size:13.75px;line-height:18px;color:#333;">Williams, Mckenzie and</div>
<div class="t" style="left:987.00px;top:942.00px;font-size:13.75px;line-height:18px;color:#333;">Adams Direct (1016)</div>
<div class="t" style="left:1348.30px;top:935.00px;font-size:13.75px;line-height:18px;color:#333;">7035 Rent Expense</div>
<div class="t" style="right:744.10px;top:935.00px;font-size:13.75px;line-height:18px;color:#333;">0</div>
<div class="t" style="right:562.50px;top:935.00px;font-size:13.75px;line-height:18px;color:#333;">950.00</div>
<div class="t" style="right:383.00px;top:935.00px;font-size:13.75px;line-height:18px;color:#333;">790,238.40</div>
<div class="t" style="left:762.70px;top:963.00px;font-size:13.75px;line-height:18px;color:#333;">Bill payment #: 00001 2/25/2025</div>
<div class="t" style="left:987.00px;top:963.00px;font-size:13.75px;line-height:18px;color:#333;">Axis Packaging (1034)</div>
<div class="t" style="left:1348.30px;top:963.00px;font-size:13.75px;line-height:18px;color:#333;">2000 Accounts Payable</div>
<div class="t" style="right:744.10px;top:963.00px;font-size:13.75px;line-height:18px;color:#333;">0</div>
<div class="t" style="right:562.50px;top:963.00px;font-size:13.75px;line-height:18px;color:#333;">37,342.50</div>
<div class="t" style="right:383.00px;top:963.00px;font-size:13.75px;line-height:18px;color:#333;">752,895.90</div>
<div class="t" style="left:762.70px;top:982.00px;font-size:13.75px;line-height:18px;color:#333;">Deposit #: 1005 2/28/2025</div>
<div class="t" style="left:1348.30px;top:982.00px;font-size:13.75px;line-height:18px;color:#333;">1100 Undeposited Funds</div>
<div class="t" style="right:744.10px;top:982.00px;font-size:13.75px;line-height:18px;color:#333;">62.90</div>
<div class="t" style="right:562.50px;top:982.00px;font-size:13.75px;line-height:18px;color:#333;">0</div>
<div class="t" style="right:383.00px;top:982.00px;font-size:13.75px;line-height:18px;color:#333;">752,958.80</div>
<div class="t" style="left:762.70px;top:1011.00px;font-size:13.75px;line-height:18px;color:#333;">Payment #: 3/3/2025</div>
<div class="t" style="left:987.00px;top:1011.00px;font-size:13.75px;line-height:18px;color:#333;">Tax Authority (1032)</div>
<div class="t" style="left:1348.30px;top:1003.00px;font-size:13.75px;line-height:18px;color:#333;">7100 Payroll Expense -</div>
<div class="t" style="left:1348.30px;top:1018.00px;font-size:13.75px;line-height:18px;color:#333;">Operating</div>
<div class="t" style="right:744.10px;top:1011.00px;font-size:13.75px;line-height:18px;color:#333;">0</div>
<div class="t" style="right:562.50px;top:1011.00px;font-size:13.75px;line-height:18px;color:#333;">678.00</div>
<div class="t" style="right:383.00px;top:1011.00px;font-size:13.75px;line-height:18px;color:#333;">752,280.80</div>
<div class="t" style="left:762.70px;top:1048.00px;font-size:13.75px;line-height:18px;color:#333;">Payment #: 3/4/2025</div>
<div class="t" style="left:987.00px;top:1048.00px;font-size:13.75px;line-height:18px;color:#333;">Tax Authority (1032)</div>
<div class="t" style="left:1348.30px;top:1040.00px;font-size:13.75px;line-height:18px;color:#333;">7101 Payroll Tax</div>
<div class="t" style="left:1348.30px;top:1055.00px;font-size:13.75px;line-height:18px;color:#333;">Expense - Operating</div>
<div class="t" style="right:744.10px;top:1048.00px;font-size:13.75px;line-height:18px;color:#333;">0</div>
<div class="t" style="right:562.50px;top:1048.00px;font-size:13.75px;line-height:18px;color:#333;">67.80</div>
<div class="t" style="right:383.00px;top:1048.00px;font-size:13.75px;line-height:18px;color:#333;">752,213.00</div>
<div class="t" style="left:762.70px;top:1086.00px;font-size:13.75px;line-height:18px;color:#333;">Bill payment #: 3/10/2025</div>
<div class="t" style="left:987.00px;top:1078.00px;font-size:13.75px;line-height:18px;color:#333;">Everest Electro Supply</div>
<div class="t" style="left:987.00px;top:1093.00px;font-size:13.75px;line-height:18px;color:#333;">(1033)</div>
<div class="t" style="left:1348.30px;top:1086.00px;font-size:13.75px;line-height:18px;color:#333;">2000 Accounts Payable</div>
<div class="t" style="right:744.10px;top:1086.00px;font-size:13.75px;line-height:18px;color:#333;">0</div>
<div class="t" style="right:562.50px;top:1086.00px;font-size:13.75px;line-height:18px;color:#333;">31,728.00</div>
<div class="t" style="right:383.00px;top:1086.00px;font-size:13.75px;line-height:18px;color:#333;">720,485.00</div>
<div class="t" style="left:762.70px;top:1123.00px;font-size:13.75px;line-height:18px;color:#333;">Payment #: 3/17/2025</div>
<div class="t" style="left:987.00px;top:1115.00px;font-size:13.75px;line-height:18px;color:#333;">Williams, Mckenzie and</div>
<div class="t" style="left:987.00px;top:1130.00px;font-size:13.75px;line-height:18px;color:#333;">Adams Direct (1016)</div>
<div class="t" style="left:1348.30px;top:1123.00px;font-size:13.75px;line-height:18px;color:#333;">7035 Rent Expense</div>
<div class="t" style="right:744.10px;top:1123.00px;font-size:13.75px;line-height:18px;color:#333;">0</div>
<div class="t" style="right:562.50px;top:1123.00px;font-size:13.75px;line-height:18px;color:#333;">950.00</div>
<div class="t" style="right:383.00px;top:1123.00px;font-size:13.75px;line-height:18px;color:#333;">719,535.00</div>
<div class="t" style="left:762.70px;top:1160.00px;font-size:13.75px;line-height:18px;color:#333;">Payment #: 3/27/2025</div>
<div class="t" style="left:987.00px;top:1152.00px;font-size:13.75px;line-height:18px;color:#333;">Tri-City Power, Water</div>
<div class="t" style="left:987.00px;top:1167.00px;font-size:13.75px;line-height:18px;color:#333;">and Phone (1024)</div>
<div class="t" style="left:1348.30px;top:1152.00px;font-size:13.75px;line-height:18px;color:#333;">7030 Telephone</div>
<div class="t" style="left:1348.30px;top:1167.00px;font-size:13.75px;line-height:18px;color:#333;">Expense</div>
<div class="t" style="right:744.10px;top:1160.00px;font-size:13.75px;line-height:18px;color:#333;">0</div>
<div class="t" style="right:562.50px;top:1160.00px;font-size:13.75px;line-height:18px;color:#333;">100.00</div>
<div class="t" style="right:383.00px;top:1160.00px;font-size:13.75px;line-height:18px;color:#333;">719,435.00</div>
<div class="t" style="left:762.70px;top:1189.00px;font-size:13.75px;line-height:18px;color:#333;">Payment #: 3/31/2025</div>
<div class="t" style="left:987.00px;top:1189.00px;font-size:13.75px;line-height:18px;color:#333;">USPS (1031)</div>
<div class="t" style="left:1348.30px;top:1189.00px;font-size:13.75px;line-height:18px;color:#333;">7040 Postage &amp; Delivery</div>
<div class="t" style="right:744.10px;top:1189.00px;font-size:13.75px;line-height:18px;color:#333;">0</div>
<div class="t" style="right:562.50px;top:1189.00px;font-size:13.75px;line-height:18px;color:#333;">2,450.00</div>
<div class="t" style="right:383.00px;top:1189.00px;font-size:13.75px;line-height:18px;color:#333;">716,985.00</div>
<div class="t" style="left:762.70px;top:1208.00px;font-size:13.75px;line-height:18px;color:#333;">Deposit #: 1006 3/31/2025</div>
<div class="t" style="left:1348.30px;top:1208.00px;font-size:13.75px;line-height:18px;color:#333;">1100 Undeposited Funds</div>
<div class="t" style="right:744.10px;top:1208.00px;font-size:13.75px;line-height:18px;color:#333;">8.99</div>
<div class="t" style="right:562.50px;top:1208.00px;font-size:13.75px;line-height:18px;color:#333;">0</div>
<div class="t" style="right:383.00px;top:1208.00px;font-size:13.75px;line-height:18px;color:#333;">716,993.99</div>
</body></html>
